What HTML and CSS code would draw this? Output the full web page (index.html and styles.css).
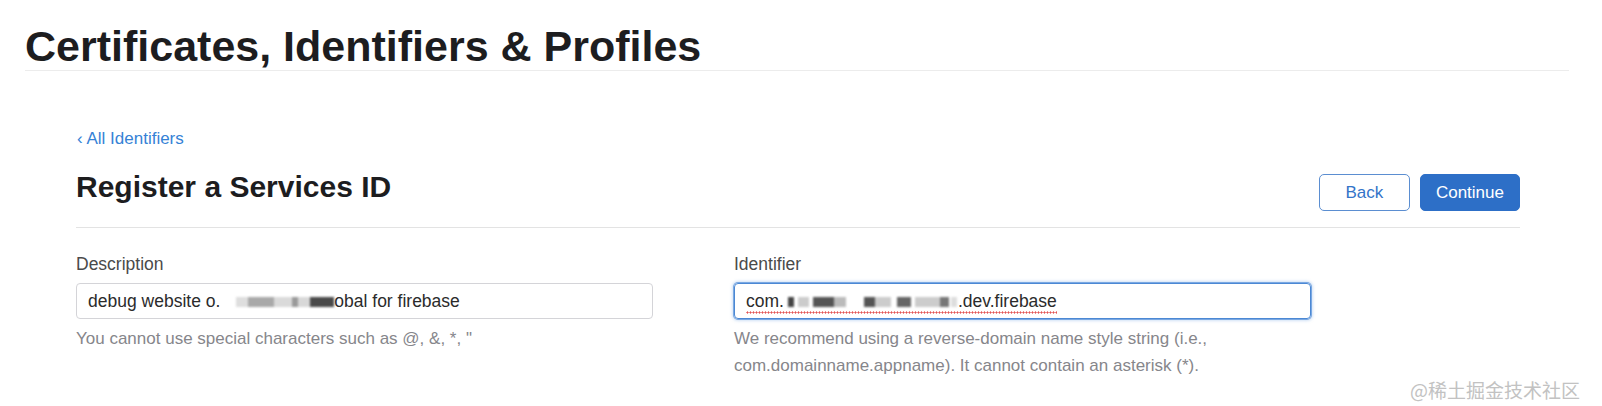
FILE: index.html
```html
<!DOCTYPE html>
<html lang="en">
<head>
<meta charset="utf-8">
<title>Register a Services ID</title>
<link rel="stylesheet" href="styles.css">
</head>
<body>
<header class="page-header">
  <h1 class="page-title">Certificates, Identifiers &amp; Profiles</h1>
</header>
<main class="content">
  <a class="back-link" href="#"><span class="chev">&lsaquo;</span> All Identifiers</a>
  <div class="title-row">
    <h2 class="section-title">Register a Services ID</h2>
    <div class="actions">
      <button class="btn btn-secondary" type="button">Back</button>
      <button class="btn btn-primary" type="button">Continue</button>
    </div>
  </div>
  <div class="form-grid">
    <div class="field">
      <label class="field-label">Description</label>
      <div class="text-input">debug website o.<span class="redact redact-desc"></span>obal for firebase</div>
      <p class="field-help">You cannot use special characters such as @, &amp;, *, "</p>
    </div>
    <div class="field">
      <label class="field-label">Identifier</label>
      <div class="text-input is-focused"><span class="spell">com.<span class="redact redact-id"></span>.dev.firebase</span></div>
      <p class="field-help">We recommend using a reverse-domain name style string (i.e., com.domainname.appname). It cannot contain an asterisk (*).</p>
    </div>
  </div>
</main>
<div class="watermark">@稀土掘金技术社区</div>
</body>
</html>
```

FILE: styles.css
```css
* { box-sizing: border-box; }

html, body {
  margin: 0;
  background: #ffffff;
}

body {
  position: relative;
  height: 406px;
  overflow: hidden;
  font-family: "Liberation Sans", Arial, sans-serif;
  color: #1d1d1f;
}

.page-header {
  margin: 0 33px 0 25px;
  padding-top: 25px;
  border-bottom: 1px solid #ececec;
}

.page-title {
  margin: 0;
  padding-bottom: 2px;
  font-size: 43px;
  line-height: 43px;
  font-weight: 700;
  color: #1d1d1f;
}

.content {
  padding: 0 82px 0 76px;
}

.back-link {
  display: block;
  margin-top: 60px;
  font-size: 17px;
  line-height: 16px;
  color: #3582d6;
  text-decoration: none;
}

.chev {
  display: inline-block;
  margin-left: 1px;
}

.title-row {
  display: flex;
  justify-content: space-between;
  align-items: flex-start;
  margin-top: 25px;
  padding-bottom: 16px;
  border-bottom: 1px solid #e3e3e3;
}

.section-title {
  margin: 0;
  font-size: 30px;
  line-height: 30px;
  font-weight: 700;
  color: #1d1d1f;
}

.actions {
  display: flex;
  gap: 10px;
  margin-top: 2px;
}

.btn {
  height: 37px;
  min-width: 91px;
  padding: 0 15px;
  border-radius: 5px;
  font-family: "Liberation Sans", Arial, sans-serif;
  font-size: 17px;
  cursor: pointer;
}

.btn-secondary {
  background: #ffffff;
  border: 1px solid #5b8ed1;
  color: #3474c9;
}

.btn-primary {
  background: #2d6fc7;
  border: 1px solid #2d6fc7;
  color: #ffffff;
}

.form-grid {
  display: grid;
  grid-template-columns: 577px 577px;
  column-gap: 81px;
  margin-top: 28px;
}

.field-label {
  display: block;
  margin-bottom: 10px;
  font-size: 17.5px;
  line-height: 17px;
  color: #4a4a4a;
}

.text-input {
  height: 36px;
  padding: 0 11px;
  border: 1px solid #d4d4d8;
  border-radius: 4px;
  font-size: 17.5px;
  line-height: 34px;
  color: #2b2b2b;
  white-space: nowrap;
  overflow: hidden;
}

.text-input.is-focused {
  border-color: #4b88d4;
  box-shadow: 0 0 0 1px #7aa8e2, 0 0 3px 2px rgba(122, 168, 226, 0.35);
}

.spell {
  padding-bottom: 3px;
  background-image: radial-gradient(circle, #e25656 0.9px, transparent 1.2px);
  background-size: 3px 3px;
  background-repeat: repeat-x;
  background-position: left bottom;
}

.redact {
  display: inline-block;
  height: 10px;
  vertical-align: 0;
  filter: blur(1.2px);
}

.redact-desc {
  width: 114px;
  background: linear-gradient(to right,
    transparent 0 16px,
    #dedede 16px 28px,
    #a9a9a9 28px 54px,
    #dadada 54px 72px,
    #9a9a9a 72px 78px,
    #d8d8d8 78px 90px,
    #4a4a4a 90px 114px);
}

.redact-id {
  width: 174px;
  background: linear-gradient(to right,
    transparent 0 4px,
    #444444 4px 10px,
    transparent 10px 14px,
    #cccccc 14px 25px,
    transparent 25px 29px,
    #555555 29px 50px,
    #bbbbbb 50px 62px,
    transparent 62px 80px,
    #555555 80px 91px,
    #cccccc 91px 107px,
    transparent 107px 113px,
    #666666 113px 127px,
    transparent 127px 131px,
    #cccccc 131px 156px,
    #777777 156px 165px,
    transparent 165px 167px,
    #dddddd 167px 173px,
    transparent 173px);
}

.field-help {
  margin: 6px 0 0;
  font-size: 17px;
  line-height: 27px;
  color: #86868b;
}

.watermark {
  position: absolute;
  right: 22px;
  bottom: 6px;
  font-family: "Noto Sans CJK SC", sans-serif;
  font-size: 19px;
  line-height: 20px;
  color: #c2c2c2;
}
```
